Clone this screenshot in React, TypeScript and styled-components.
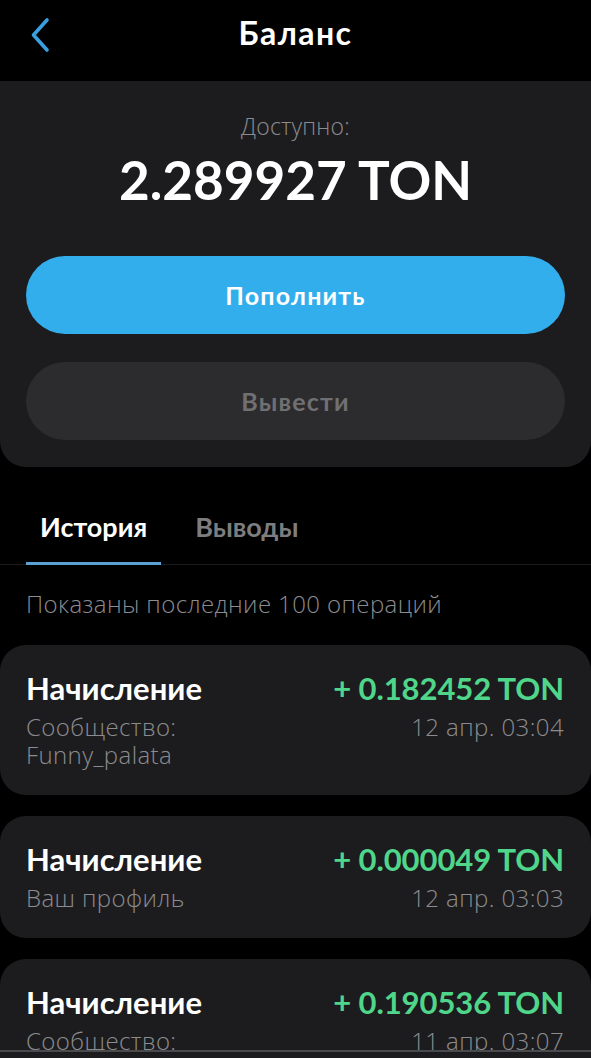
import React from 'react';
import styled, { createGlobalStyle } from 'styled-components';

const GlobalStyle = createGlobalStyle`
  * { box-sizing: border-box; }
  body {
    margin: 0;
    background: #000;
    font-family: Lato, 'Noto Sans', sans-serif;
    color: #fff;
  }
`;

type IOperation = {
  title: string;
  amount: string;
  date: string;
  source: string[];
};

const operations: IOperation[] = [
  {
    title: 'Начисление',
    amount: '+ 0.182452 TON',
    date: '12 апр. 03:04',
    source: ['Сообщество:', 'Funny_palata'],
  },
  {
    title: 'Начисление',
    amount: '+ 0.000049 TON',
    date: '12 апр. 03:03',
    source: ['Ваш профиль'],
  },
  {
    title: 'Начисление',
    amount: '+ 0.190536 TON',
    date: '11 апр. 03:07',
    source: ['Сообщество:', 'Funny_palata'],
  },
];

const lightFont = `'Open Sans', Lato, sans-serif`;

const Page = styled.div`
  width: 591px;
  min-height: 1058px;
  background: #000;
`;

const Header = styled.header`
  height: 81px;
  display: grid;
  grid-template-columns: 80px 1fr 80px;
  align-items: center;
  padding-bottom: 15px;
  h1 {
    margin: 0;
    text-align: center;
    font-size: 32px;
    font-weight: 700;
    letter-spacing: 1.4px;
    line-height: 38px;
  }
`;

const BackButton = styled.button`
  background: none;
  border: 0;
  padding: 0 0 0 30px;
  margin-top: 4px;
  display: flex;
  align-items: center;
  cursor: pointer;
`;

const BalanceCard = styled.section`
  background: #1c1c1e;
  border-radius: 0 0 26px 26px;
  padding: 30px 26px 27px;
  display: flex;
  flex-direction: column;
  align-items: center;
`;

const Label = styled.p`
  margin: 0 0 7px;
  font-family: ${lightFont};
  font-size: 23px;
  font-weight: 300;
  letter-spacing: 0.2px;
  color: #8c8c90;
  line-height: 30px;
`;

const Amount = styled.p`
  margin: 0 0 44px;
  font-size: 53px;
  font-weight: 700;
  line-height: 64px;
`;

const ActionButton = styled.button<{ $primary?: boolean }>`
  width: 100%;
  height: 78px;
  border: 0;
  border-radius: 39px;
  font-family: inherit;
  font-size: 25px;
  font-weight: 700;
  letter-spacing: 1.2px;
  background: ${({ $primary }) => ($primary ? '#33aeec' : '#2c2c2e')};
  color: ${({ $primary }) => ($primary ? '#fff' : '#707073')};
  & + & {
    margin-top: 28px;
  }
`;

const Tabs = styled.nav`
  margin-top: 44px;
  display: flex;
  border-bottom: 1px solid #1c1c1e;
  padding-left: 26px;
`;

const Tab = styled.div<{ $active?: boolean }>`
  padding: 0 14px 19px;
  font-size: 27px;
  font-weight: 700;
  line-height: 32px;
  color: ${({ $active }) => ($active ? '#fff' : '#7d7d80')};
  border-bottom: 3px solid ${({ $active }) => ($active ? '#5aa2d6' : 'transparent')};
  margin-bottom: -1px;
  & + & {
    margin-left: 20px;
  }
`;

const Note = styled.p`
  margin: 24px 26px 26px;
  font-family: ${lightFont};
  font-size: 24px;
  font-weight: 300;
  letter-spacing: 0.4px;
  color: #8c8c90;
  line-height: 30px;
`;

const List = styled.div`
  display: flex;
  flex-direction: column;
  gap: 21px;
`;

const OpCard = styled.div`
  background: #1c1c1e;
  border-radius: 26px;
  padding: 24px 27px 26px 26px;
`;

const OpRow = styled.div`
  display: flex;
  justify-content: space-between;
  align-items: flex-start;
`;

const OpTitle = styled.span`
  font-size: 31px;
  font-weight: 700;
  line-height: 38px;
`;

const OpAmount = styled(OpTitle)`
  color: #4fd68b;
  letter-spacing: -0.1px;
`;

const OpSub = styled.span`
  font-family: ${lightFont};
  font-size: 24px;
  font-weight: 300;
  letter-spacing: 0.4px;
  color: #8c8c90;
  line-height: 28px;
  display: block;
`;

const OpDetails = styled(OpRow)`
  margin-top: 6px;
`;

const BottomBar = styled.div`
  position: fixed;
  left: 0;
  right: 0;
  bottom: 0;
  height: 8px;
  background: #1c1c1e;
  border-top: 2px solid #4a4a4c;
`;

export default function App() {
  return (
    <Page>
      <GlobalStyle />
      <Header>
        <BackButton aria-label='Назад'>
          <svg width='20' height='38' viewBox='0 0 20 38'>
            <path
              d='M17 4 L3.5 19 L17 34'
              fill='none'
              stroke='#3a9fe0'
              strokeWidth='3.6'
              strokeLinecap='round'
              strokeLinejoin='round'
            />
          </svg>
        </BackButton>
        <h1>Баланс</h1>
        <span />
      </Header>
      <BalanceCard>
        <Label>Доступно:</Label>
        <Amount>2.289927 TON</Amount>
        <ActionButton $primary>Пополнить</ActionButton>
        <ActionButton>Вывести</ActionButton>
      </BalanceCard>
      <Tabs>
        <Tab $active>История</Tab>
        <Tab>Выводы</Tab>
      </Tabs>
      <Note>Показаны последние 100 операций</Note>
      <List>
        {operations.map((op, i) => (
          <OpCard key={i}>
            <OpRow>
              <OpTitle>{op.title}</OpTitle>
              <OpAmount>{op.amount}</OpAmount>
            </OpRow>
            <OpDetails>
              <div>
                {op.source.map((line) => (
                  <OpSub key={line}>{line}</OpSub>
                ))}
              </div>
              <OpSub>{op.date}</OpSub>
            </OpDetails>
          </OpCard>
        ))}
      </List>
      <BottomBar />
    </Page>
  );
}
